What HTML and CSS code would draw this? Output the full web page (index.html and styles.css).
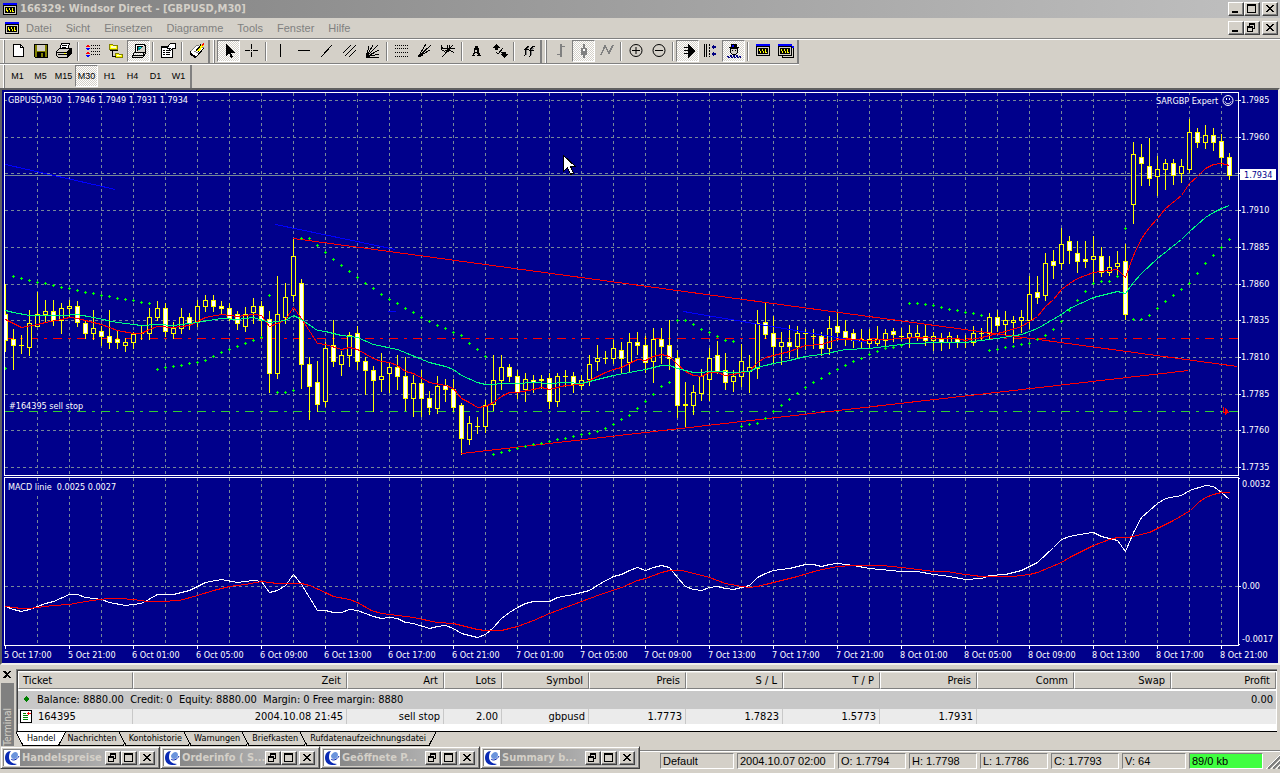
FILE: index.html
```html
<!DOCTYPE html>
<html lang="de">
<head>
<meta charset="utf-8">
<title>166329: Windsor Direct - [GBPUSD,M30]</title>
<link rel="stylesheet" href="styles.css">
</head>
<body>
<svg class="defs" width="0" height="0" aria-hidden="true">
  <symbol id="app" viewBox="0 0 14 12"><path fill="#000" d="M0 0h14v12H0z"/><path fill="#d4d0c8" d="M1 3h12v8H1z"/><path fill="#000" d="M2 4h10v6H2z"/><path fill="#00f" d="M0 0h14v2H0z"/><path fill="#ff0" d="M3 5h1v2h1v2H4V8H3zM6 5h1v2h1v2H7V7H6zM9 5h1v3h1v1H9z"/></symbol>
  <symbol id="min" viewBox="0 0 12 10"><path fill="#000" d="M2 7h6v2H2z"/></symbol>
  <symbol id="max" viewBox="0 0 12 10"><path fill="#000" d="M1 0h9v9H1zM2 2v6h7V2z" fill-rule="evenodd"/></symbol>
  <symbol id="rest" viewBox="0 0 12 10"><path fill="#000" fill-rule="evenodd" d="M3 0h6v6H7v3H1V3h2zM4 2v1h3v2h1V2zM2 5v3h4V5z"/></symbol>
  <symbol id="close" viewBox="0 0 12 10"><path fill="#000" d="M2 1h2v1h1v1h2V2h1V1h2v1H9v1H8v1H7v1h1v1h1v1h1v1H8V7H7V6H5v1H4v1H2V7h1V6h1V5h1V4H4V3H3V2H2z"/></symbol>
  <symbol id="globe" viewBox="0 0 16 16"><path fill="#fff" d="M0 0h16v16H0z"/><path fill="#0a2ab4" d="M7 1C3 1 1 4 1 8s3 7 7 7c2 0 4 0 5-1-5 0-8-3-8-7 0-3 1-5 2-6z"/><path fill="#6a94dc" d="M9 3c2-2 5-1 5 2 0 2-2 4-4 4S7 7 7 6s1-2 2-3z"/><path fill="none" stroke="#0a2ab4" d="M7 9c2 2 6 1 8-3"/></symbol>
</svg>
<header>
  <div class="title">
    <svg class="app-icon" width="14" height="12"><use href="#app"/></svg>
    <h1>166329: Windsor Direct - [GBPUSD,M30]</h1>
    <div class="wb"><button aria-label="Minimize"><svg><use href="#min"/></svg></button><button aria-label="Maximize"><svg><use href="#max"/></svg></button><button class="gap" aria-label="Close"><svg><use href="#close"/></svg></button></div>
  </div>
  <div class="menu">
    <svg class="app-icon" width="14" height="12"><use href="#app"/></svg>
    <nav><button>Datei</button><button>Sicht</button><button>Einsetzen</button><button>Diagramme</button><button>Tools</button><button>Fenster</button><button>Hilfe</button></nav>
    <div class="wb"><button aria-label="Minimize chart"><svg><use href="#min"/></svg></button><button aria-label="Restore chart"><svg><use href="#rest"/></svg></button><button class="gap" aria-label="Close chart"><svg><use href="#close"/></svg></button></div>
  </div>
  <div class="bars">
    <div class="bar">
      <div class="group">
        <button aria-label="New"><svg viewBox="0 0 16 16"><path fill="#fff" stroke="#000" d="M3.5 1.500h7l3 3v9h-10z"/><path fill="none" stroke="#000" d="M10.500 1.500v3h3"/></svg></button>
        <button aria-label="Save"><svg viewBox="0 0 16 16"><path d="M1 1h14v14H2l-1-1z"/><path fill="#808000" d="M2 2h2v6h8V2h2v12H2z"/><path fill="#d4d0c8" d="M4 2h8v6H4zM10 10h2v4h-2z"/><path d="M4 9h8v5h-2v-4H8v4H4z"/></svg></button>
        <button aria-label="Print"><svg viewBox="0 0 16 16"><path fill="#fff" stroke="#000" d="M5.500.5h8l-2 6h-8z"/><path stroke="#000" d="M6 2.500h5M6 4.500h4"/><path fill="#d4d0c8" stroke="#000" d="M.5 8.500l3-3h11l-3 4v5h-9l-2-2z"/><path stroke="#000" d="M1 9.500h10M2 11.500h9M11 9l4-3v5l-3 3"/><path fill="#ff0" d="M8 10h2v1H8z"/></svg></button>
        <i class="sep"></i>
        <button aria-label="Market watch"><svg viewBox="0 0 16 16"><path fill="#f00" d="M3 1l2 3H1zM3 8l2 3H1z"/><path fill="#00f" d="M3 8L1 5h4zM3 15l-2-3h4z"/><path stroke="#000" stroke-dasharray="1 1" d="M6 2.500h9M6 5.500h9M6 8.500h9M6 11.500h9"/></svg></button>
        <button aria-label="Navigator"><svg viewBox="0 0 16 16"><path fill="#ff0" stroke="#808000" d="M1.500 3.500v-2h3l1 1h4v4h-8zM7.500 10.500h3l1 1h3v3h-7z"/><path fill="#ffc" d="M3 3h5v2H3zM9 12h4v1H9z"/><path fill="none" stroke="#000" d="M4.500 7v6h3M2 7.500h8"/></svg></button>
        <button class="on" aria-label="Terminal"><svg viewBox="0 0 16 16"><path fill="#fff" stroke="#000" d="M4.500 1.500h9v8h-9z"/><path fill="#008080" stroke="#000" d="M6.500 3.500h5v4h-5z"/><path fill="#d4d0c8" stroke="#000" d="M1.500 12.500l2-3h10l-2 3zM1.500 12.500v2h10l3-4v-8h-1"/><path fill="#0ff" d="M8 4h2v1H8z"/></svg></button>
        <i class="sep"></i>
        <button aria-label="Properties"><svg viewBox="0 0 16 16"><path fill="#fff" stroke="#000" d="M1.500 3.500h11v11h-11z"/><path d="M1 3h7v2H1z"/><path stroke="#000" d="M3 7.500h2M6 7.500h4M3 9.500h2M6 9.500h4M3 11.500h2M6 11.500h4"/><path fill="#fff" stroke="#000" d="M8.500 2.500l2-2h5v5h-3l-2 2-1-1 1-1H7.500z"/></svg></button>
        <i class="sep"></i>
        <button aria-label="New order"><svg viewBox="0 0 16 16"><path fill="#fff" stroke="#808080" d="M1 9l7-7 7 3-7 8z"/><path fill="#fff" stroke="#000" d="M1 10l6 4 8-9M1 8v3l6 4"/><path stroke="#808080" d="M5 8l4 2M7 6l4 2"/><path stroke="#000" stroke-width="3" d="M8 8l5-6"/><path stroke="#ff0" stroke-width="2" d="M9 8l5-6"/><path stroke="#f00" stroke-width="2" d="M13 2l2-1"/></svg></button>
      </div>
      <div class="group">
        <button class="on" aria-label="Cursor"><svg viewBox="0 0 16 16"><path d="M5 1v12l3-3 2 5 2-1-2-4h4z"/></svg></button>
        <button aria-label="Crosshair"><svg viewBox="0 0 16 16"><path stroke="#000" d="M1 7.500h5M9 7.500h5M7.500 1v5M7.500 9v5"/><path d="M7 7h1v1H7z"/></svg></button>
        <i class="sep"></i>
        <button aria-label="Vertical line"><svg viewBox="0 0 16 16"><path stroke="#000" d="M7.500 1v13"/></svg></button>
        <button aria-label="Horizontal line"><svg viewBox="0 0 16 16"><path stroke="#000" d="M2 7.500h12"/></svg></button>
        <button aria-label="Trendline"><svg viewBox="0 0 16 16"><path stroke="#000" d="M2 14L13 2"/></svg></button>
        <button aria-label="Channel"><svg viewBox="0 0 16 16"><path stroke="#000" d="M1 10l8-8M3 13L14 2M7 14l7-7"/></svg></button>
        <button aria-label="Gann fan"><svg viewBox="0 0 16 16"><path stroke="#000" d="M1 14L4 3M1 14L8 2M1 14L13 2M1 14l13-7M1 14l13-3M1 14h13"/></svg></button>
        <i class="sep"></i>
        <button aria-label="Fibonacci retracement"><svg viewBox="0 0 16 16"><path stroke="#000" stroke-dasharray="1 1" d="M1 2.500h14M1 5.500h14M1 9.500h14M1 13.500h14"/></svg></button>
        <button aria-label="Fibonacci fan"><svg viewBox="0 0 16 16"><path stroke="#000" d="M1 14L9 1M1 14L14 2M1 14l12-7M1 14l5-2"/></svg></button>
        <button aria-label="Fibonacci arcs"><svg viewBox="0 0 16 16"><path fill="none" stroke="#000" d="M2 14L13 2M1 2c0 3 2 4 5 4 2 0 2-3 2-4M1 5c2 6 9 2 9-3M7 9c3-2 5-2 7 1M9 6c2-1 4-1 6 0"/></svg></button>
        <i class="sep"></i>
        <button aria-label="Text"><svg viewBox="0 0 16 16"><path fill-rule="evenodd" d="M6 3h3l2 9h1v1H8v-1h1l-1-2H6l-1 2h1v1H3v-1h1zM7 5L6 9h2z"/></svg></button>
        <button aria-label="Arrows"><svg viewBox="0 0 16 16"><path d="M4 1l4 4H6v2H3V5H1zM9 9h5v2h2l-4 4-4-4h2z"/><path fill="none" stroke="#000" d="M4 9l2 2 5-6"/></svg></button>
        <i class="sep"></i>
        <button aria-label="Indicators"><svg viewBox="0 0 16 16"><path fill="none" stroke="#808080" d="M5.500 12V6l2-2M10.500 12V7l2-2"/><path fill="none" stroke="#000" d="M3 12.500h1l1-7 2-2h1M3 6.500h5M8 13.500h1l1-8 2-2h2M8 7.500h5"/></svg></button>
      </div>
      <div class="group">
        <button aria-label="Bar chart"><svg viewBox="0 0 16 16"><path fill="#808080" d="M7 1h2v2h3v1H9v10H7v-2H4v-1h3z"/></svg></button>
        <button class="on" aria-label="Candlesticks"><svg viewBox="0 0 16 16"><path fill="#808080" d="M7 1h2v4h2v7H9v3H7v-3H5V5h2z"/><path fill="#fff" d="M7 6h2v2H7z"/></svg></button>
        <button aria-label="Line chart"><svg viewBox="0 0 16 16"><path fill="none" stroke="#808080" stroke-width="1.500" d="M2 12L6 3l4 7 4-8"/></svg></button>
        <i class="sep"></i>
        <button aria-label="Zoom in"><svg viewBox="0 0 16 16" class="smooth"><circle cx="8" cy="7.500" r="6" fill="none" stroke="#000"/><path stroke="#000" d="M4 7.500h8M8 4v7"/></svg></button>
        <button aria-label="Zoom out"><svg viewBox="0 0 16 16" class="smooth"><circle cx="8" cy="7.500" r="6" fill="none" stroke="#000"/><path stroke="#000" d="M4 7.500h8"/></svg></button>
        <i class="sep"></i>
        <button class="on" aria-label="Auto scroll"><svg viewBox="0 0 16 16"><path d="M8 1l7 7-7 7z"/><path stroke="#000" d="M4 4.500h5M4 7.500h5M4 10.500h5"/></svg></button>
        <button aria-label="Chart shift"><svg viewBox="0 0 16 16"><path stroke="#000" d="M1.500 1v13M3.500 1v13"/><path stroke="#000" stroke-dasharray="2 1" d="M6.500 1v13"/><path fill="#000080" d="M8 4l3-3v2h2v2h-2v2zM8 11l3-3v2h2v2h-2v2z"/></svg></button>
        <button class="on" aria-label="Experts"><svg viewBox="0 0 16 16"><path d="M5 1h6v3h2v1H3V4h2z"/><path fill="#d4d0c8" stroke="#000" d="M4.500 5.500h7v4l-2 2h-3l-2-2z"/><path fill="#00f" d="M6 2h2v2H6z"/><path d="M6 7h1v1H6zM9 7h1v1H9z"/><path stroke="#000080" stroke-dasharray="2 1" d="M4 12.500h9M1 13.500h14M2 14.500h13"/></svg></button>
        <i class="sep"></i>
        <button aria-label="Chart window"><svg viewBox="0 0 16 16"><path d="M1 1h14v12H1z"/><path fill="#00f" d="M1 1h14v2H1z"/><path fill="#d4d0c8" d="M2 4h12v8H2z"/><path d="M3 5h10v6H3z"/><path fill="#ff0" d="M4 6h1v2h1v2H5V8H4zM7 6h1v2h1v2H8V8H7zM10 6h1v3h1v1h-2z"/></svg></button>
        <button aria-label="All charts"><svg viewBox="0 0 16 16"><path fill="#d4d0c8" stroke="#000" d="M4.500 4.500h11v10h-11z"/><path d="M0 1h14v12H0z"/><path fill="#00f" d="M0 1h14v2H0zM14 3h2v2h-2z"/><path fill="#d4d0c8" d="M1 4h12v8H1z"/><path d="M2 5h10v6H2z"/><path fill="#ff0" d="M3 6h1v2h1v2H4V8H3zM6 6h1v2h1v2H7V8H6zM9 6h1v3h1v1H9z"/></svg></button>
      </div>
    </div>
    <div class="bar">
      <div class="group tf"><button>M1</button><button>M5</button><button>M15</button><button class="on">M30</button><button>H1</button><button>H4</button><button>D1</button><button>W1</button></div>
    </div>
  </div>
</header>
<main class="chart">
  <svg id="chart" viewBox="2 90 1276 573" role="img" aria-label="GBPUSD M30"></svg>
</main>
<section class="terminal">
  <aside><button class="tclose" aria-label="Close terminal"><svg width="8" height="7" viewBox="0 0 8 7"><path d="M0 0h2l2 2 2-2h2L5 3.500 8 7H6L4 5 2 7H0l3-3.500z"/></svg></button><div class="vtitle"><span>Terminal</span></div></aside>
  <div class="tmain">
    <div class="sheet">
      <table>
        <colgroup><col class="c115"><col class="c214"><col class="c97"><col class="c58"><col class="c87"><col class="c97"><col class="c97"><col class="c97"><col class="c97"><col class="c97"><col class="c97"><col></colgroup>
        <thead><tr><th>Ticket</th><th>Zeit</th><th>Art</th><th>Lots</th><th>Symbol</th><th>Preis</th><th>S / L</th><th>T / P</th><th>Preis</th><th>Comm</th><th>Swap</th><th>Profit</th></tr></thead>
        <tbody>
          <tr class="space"><td colspan="12"></td></tr>
          <tr class="balance"><td colspan="11"><svg width="6" height="6" viewBox="0 0 6 6"><path fill="#008000" d="M3 0l3 3-3 3-3-3z"/></svg>Balance: 8880.00&nbsp; Credit: 0&nbsp; Equity: 8880.00&nbsp; Margin: 0 Free margin: 8880</td><td>0.00</td></tr>
          <tr class="order"><td><svg width="12" height="13" viewBox="0 0 12 13"><path fill="#fff" stroke="#000" d="M.5.5h11v12H.5z"/><path stroke="#008000" d="M3 3.500h3M3 5.500h5M3 7.500h5M3 9.500h5"/><path stroke="#f00" d="M7 3.500h4M8.500 2v3"/></svg>164395</td><td>2004.10.08 21:45</td><td>sell stop</td><td>2.00</td><td>gbpusd</td><td>1.7773</td><td>1.7823</td><td>1.5773</td><td>1.7931</td><td class="none"></td><td class="none"></td><td class="none"></td></tr>
        </tbody>
      </table>
    </div>
    <div class="tabs">
      <svg viewBox="0 0 10 14"><path fill="#fff" d="M0 0h10v14H7z"/><path d="M0 0l7 13.500h3" fill="none" stroke="#000"/></svg>
      <button class="active">Handel</button>
      <svg viewBox="0 0 10 14"><path fill="#fff" d="M0 0h8L1 14H0z"/><path d="M8.500 0L1.500 13.500H0M2 13.500h8" fill="none" stroke="#000"/></svg>
      <button>Nachrichten</button>
      <svg viewBox="0 0 10 14"><path d="M1 0l7 13.500h2M0 13.500h5l2-3" fill="none" stroke="#000"/></svg>
      <button>Kontohistorie</button>
      <svg viewBox="0 0 10 14"><path d="M1 0l7 13.500h2M0 13.500h5l2-3" fill="none" stroke="#000"/></svg>
      <button>Warnungen</button>
      <svg viewBox="0 0 10 14"><path d="M1 0l7 13.500h2M0 13.500h5l2-3" fill="none" stroke="#000"/></svg>
      <button>Briefkasten</button>
      <svg viewBox="0 0 10 14"><path d="M1 0l7 13.500h2M0 13.500h5l2-3" fill="none" stroke="#000"/></svg>
      <button>Rufdatenaufzeichnungsdatei</button>
      <svg viewBox="0 0 10 14"><path d="M9 0L2 13.500H0" fill="none" stroke="#000"/></svg>
    </div>
  </div>
</section>
<footer>
  <div class="mdi"><div class="cap-bar"><svg class="globe"><use href="#globe"/></svg><b>Handelspreise</b><div class="wb"><button aria-label="Restore"><svg><use href="#rest"/></svg></button><button aria-label="Maximize"><svg><use href="#max"/></svg></button><button class="gap" aria-label="Close"><svg><use href="#close"/></svg></button></div></div></div>
  <div class="mdi"><div class="cap-bar"><svg class="globe"><use href="#globe"/></svg><b>Orderinfo ( S...</b><div class="wb"><button aria-label="Restore"><svg><use href="#rest"/></svg></button><button aria-label="Maximize"><svg><use href="#max"/></svg></button><button class="gap" aria-label="Close"><svg><use href="#close"/></svg></button></div></div></div>
  <div class="mdi"><div class="cap-bar"><svg class="globe"><use href="#globe"/></svg><b>Geöffnete P...</b><div class="wb"><button aria-label="Restore"><svg><use href="#rest"/></svg></button><button aria-label="Maximize"><svg><use href="#max"/></svg></button><button class="gap" aria-label="Close"><svg><use href="#close"/></svg></button></div></div></div>
  <div class="mdi"><div class="cap-bar"><svg class="globe"><use href="#globe"/></svg><b>Summary b...</b><div class="wb"><button aria-label="Restore"><svg><use href="#rest"/></svg></button><button aria-label="Maximize"><svg><use href="#max"/></svg></button><button class="gap" aria-label="Close"><svg><use href="#close"/></svg></button></div></div></div>
  <div class="status"><span class="w74">Default</span><span class="w98">2004.10.07 02:00</span><span class="w68">O: 1.7794</span><span class="w68">H: 1.7798</span><span class="w68">L: 1.7786</span><span class="w68">C: 1.7793</span><span class="w64">V: 64</span><span class="w74 net">89/0 kb</span>
    <svg class="grip" viewBox="0 0 15 15"><path stroke="#fff" d="M0 15L15 0M5 15L15 5M10 15l5-5"/><path stroke="#808080" stroke-width="2" d="M2 15L15 2M7 15l8-8M12 15l3-3"/></svg></div>
</footer>
<script src="chart.js"></script>
</body>
</html>
```
FILE: styles.css
```css
* { box-sizing: border-box; }
body { margin: 0; background: #d4d0c8; color: #000; font: 11px/14px "DejaVu Sans Condensed", "DejaVu Sans", sans-serif; }
button { margin: 0; padding: 0; border: 0; background: none; color: inherit; font: inherit; }
svg { shape-rendering: crispEdges; flex: none; display: block; }
.smooth { shape-rendering: auto; }
.defs { position: absolute; }

.title { display: flex; align-items: center; height: 18px; padding: 0 2px 0 3px; background: linear-gradient(to right, #808080, #c0c0c0); }
.title h1 { flex: 1; margin: 0 0 0 3px; color: #d4d0c8; font-size: 11px; line-height: 18px; font-weight: bold; white-space: nowrap; }
.wb { display: flex; flex: none; margin-left: auto; }
.wb button { width: 16px; height: 14px; padding: 1px; background: #d4d0c8; border: 1px solid; border-color: #fff #404040 #404040 #fff; box-shadow: inset -1px -1px #808080; }
.wb svg { width: 12px; height: 10px; }
.wb .gap { margin-left: 2px; }

.menu { display: flex; align-items: center; height: 20px; padding: 0 2px 0 5px; }
.menu nav { display: flex; gap: 14px; margin-left: 7px; color: #808080; font: 11px/18px "Liberation Sans", sans-serif; }

.bars { border-top: 1px solid #808080; box-shadow: inset 0 1px #fff; padding-top: 1px; height: 50px; }
.bar { display: flex; height: 24px; width: max-content; }
.bar:first-child { height: 25px; border-bottom: 1px solid #fff; box-shadow: inset 0 -1px #808080; }
.group { display: flex; margin-left: 3px; padding-left: 3px; border-left: 1px solid #fff; box-shadow: inset 1px 0 #808080; border-right: 2px solid #808080; height: 23px; }
.group:first-child { padding-left: 2px; }
.group button { display: grid; place-items: center; width: 23px; height: 22px; }
.group button svg { width: 16px; height: 16px; }
.group .on { background: repeating-conic-gradient(#fff 0 25%, #d4d0c8 0 50%) 0 0 / 2px 2px; border: 1px solid; border-color: #808080 #fff #fff #808080; }
.sep { width: 2px; margin: 2px; background: linear-gradient(to right, #808080 50%, #fff 50%); }
.tf { font: 9px/12px "Liberation Sans", sans-serif; }

.chart { border: 2px solid; border-color: #606060 #f0eeea #f0eeea #606060; background: #00008b; }
#chart { width: 100%; height: auto; }
#chart text { fill: #fff; font-size: 9px; white-space: pre; }
#chart .price-now { fill: #00008b; }

.terminal { display: flex; padding: 4px 3px 0 0; }
.terminal aside { width: 16px; display: flex; flex-direction: column; padding: 2px 2px 0 1px; }
.tclose { padding: 0 2px 5px; }
.vtitle { flex: 1; display: flex; align-items: flex-end; background: #808080; color: #d4d0c8; }
.vtitle span { writing-mode: vertical-rl; transform: rotate(180deg); font-size: 10px; line-height: 13px; }
.tmain { flex: 1; min-width: 0; }
.sheet { background: #fff; border: 1px solid #808080; border-width: 1px 0 0 1px; box-shadow: inset 1px 1px #404040; padding: 2px 1px 7px 1px; border-bottom: 1px solid #000; }
table { width: 100%; table-layout: fixed; border-collapse: separate; border-spacing: 0; }
.c115 { width: 115px; } .c214 { width: 214px; } .c97 { width: 97px; } .c58 { width: 58px; } .c87 { width: 87px; }
th { height: 17px; padding: 0 5px; text-align: right; font-weight: normal; background: #d4d0c8; border: 1px solid; border-color: #e8e6e0 #808080 #808080 #fff; line-height: 15px; }
th:first-child { text-align: left; padding-left: 4px; }
td { padding: 0 3px 0 0; text-align: right; white-space: nowrap; }
.space td { height: 2px; }
.balance td { height: 18px; background: #c8c8c8; line-height: 18px; }
.balance td:first-child { text-align: left; padding-left: 5px; }
.balance svg { display: inline-block; margin-right: 8px; vertical-align: 1px; }
.order td { height: 15px; background: #ebebeb; border-right: 1px solid #c8c8c8; line-height: 15px; }
.order td:first-child { display: flex; align-items: center; gap: 6px; padding-left: 2px; }
.order .none { border-right-color: #ebebeb; }
.tabs { display: flex; height: 14px; font-size: 9px; line-height: 13px; }
.tabs svg { width: 10px; height: 14px; }
.tabs button { padding: 0 1px; border-bottom: 1px solid #000; }
.tabs .active { background: #fff; }

footer { display: flex; height: 28px; border-bottom: 1px solid #fff; }
.mdi { width: 160px; height: 23px; flex: none; padding: 2px; border: 1px solid; border-color: #d4d0c8 #404040 #404040 #d4d0c8; box-shadow: inset 1px 1px #fff, inset -1px -1px #808080; }
.cap-bar { display: flex; align-items: center; height: 17px; padding: 0 2px 0 1px; background: linear-gradient(to right, #808080, #c0c0c0 90%); }
.globe { width: 16px; height: 16px; shape-rendering: auto; }
.cap-bar b { flex: 1; min-width: 0; overflow: hidden; margin-left: 2px; color: #d4d0c8; white-space: nowrap; }
.status { flex: 1; display: flex; align-items: flex-end; gap: 3px; height: 23px; margin-top: 4px; padding: 0 0 4px 20px; border-top: 1px solid #808080; box-shadow: inset 0 1px #fff; font: 11px/14px "Liberation Sans", sans-serif; }
.status span { padding: 0 2px; height: 16px; border: 1px solid; border-color: #808080 #fff #fff #808080; white-space: nowrap; flex: none; }
.w74 { width: 74px; } .w98 { width: 98px; } .w68 { width: 68px; } .w64 { width: 64px; }
.status .net { background: #40ff40; }
.grip { width: 15px; height: 15px; margin-left: auto; }
```
FILE: chart.js
```js
// Candles, one every 8px: high, body top, body bottom, low; "f" marks a falling bar.
const candles = `284,314,340,352f 329,339,345,370f 335,345,345,354 310,323,347,356 292,314,326,326 300,311,314,322 300,311,320,326f 303,308,320,334 300,306,308,317 301,306,322,327f 320,323,333,339f 310,328,333,340 326,331,336,346f 310,336,342,349f 330,339,342,349f 338,342,345,352 332,334,342,349 325,333,333,340 308,317,333,340 301,308,317,321 303,308,331,337f 322,328,333,339 308,317,328,334 313,317,323,330f 300,306,321,327 295,300,306,312 295,300,306,312f 301,306,308,315f 303,308,318,321f 311,314,323,330f 307,314,326,332 298,306,312,324 301,306,320,336f 311,319,373,393f 276,314,373,379 283,297,317,324 238,256,295,302 279,283,364,389f 357,364,386,420f 361,382,404,412f 342,348,401,407 320,345,361,367f 351,355,364,376 332,335,355,367 326,333,361,370f 357,361,370,395f 366,370,380,412f 353,376,379,392 363,367,373,393 355,367,376,390f 357,376,398,411f 375,383,398,417 370,383,398,417f 391,398,407,415f 376,386,408,414 379,385,389,402f 379,389,407,412f 403,405,438,455f 416,423,439,445 417,426,426,434 400,405,426,433 355,380,404,411 355,367,380,390 364,367,376,382f 370,376,392,399f 373,379,389,402 375,380,382,393f 375,379,380,389f 373,378,401,409f 373,376,401,407 370,376,376,387 372,376,384,393f 375,380,385,390 355,364,379,386 345,358,361,371 351,358,358,364 340,348,358,364 342,350,358,374f 333,342,362,372 332,342,345,355f 336,345,362,373f 328,339,361,383 328,339,346,364f 320,345,358,370f 350,358,405,418f 382,404,405,427f 385,392,405,415 369,376,393,401 348,358,379,401 341,355,371,374f 353,370,382,390f 370,376,381,392 344,361,376,387 355,367,371,393 310,323,368,379 303,322,334,339f 316,333,346,363f 332,342,346,365 325,342,346,359f 326,333,346,358 329,333,333,350 329,336,336,349 332,336,348,356f 316,328,348,355 312,326,332,341f 320,331,337,346f 329,333,340,348f 329,339,341,348 329,339,343,349 326,339,343,346 329,333,340,347 328,331,334,342f 328,336,336,341 325,333,337,348 325,333,336,341 325,336,340,346f 332,336,340,351 333,339,342,351f 332,336,342,349 335,339,342,348f 335,342,342,348 326,333,342,346 328,333,333,340 313,317,333,339 310,317,325,332f 311,320,324,336 316,320,322,343 310,317,320,333 276,294,320,329 276,292,297,304f 253,263,295,301 250,261,265,279f 228,244,263,270 236,241,250,264f 241,253,261,273f 241,259,261,268f 236,256,259,283 247,256,272,277f 256,267,272,276 251,263,266,276 244,261,314,320f 142,154,204,224 144,157,163,186f 138,166,178,186f 156,169,176,196 159,163,169,190 159,163,175,185f 159,166,173,183 119,132,169,173 128,132,142,148f 125,135,142,149 128,135,142,151f 134,141,157,166f 153,157,175,180f`.split(' ');

// Parabolic SAR, one value per candle.
const sar = [368,276,278,280,282,283,285,287,288,290,292,293,295,296,298,299,300,302,303,369,367,366,365,363,362,360,356,352,349,346,343,340,337,295,392,392,390,238,238,245,252,259,265,271,277,283,288,294,299,303,308,312,317,321,325,328,332,335,343,349,356,454,452,450,448,446,444,443,441,439,438,436,434,433,431,428,424,419,415,408,401,394,386,382,320,320,324,329,332,336,340,341,426,424,423,418,411,405,399,393,387,382,378,373,369,365,361,358,354,351,348,347,345,303,303,304,305,307,309,310,312,313,315,350,349,347,346,344,343,339,335,329,321,310,300,291,283,281,281,276,228,319,319,315,308,301,295,289,283,273,263,255,247,239];

const fast = '5,319 21,327 37,324 45,322 61,319 69,317 77,318 93,322 101,324 117,330 133,333 141,333 149,329 157,326 173,327 189,325 197,321 205,317 221,314 237,316 253,314 261,315 269,326 277,323 285,319 293,307 301,318 317,343 325,344 341,349 349,347 357,349 373,358 381,361 389,362 397,365 405,371 413,373 429,382 445,385 453,388 461,398 469,402 477,407 485,406 493,402 501,396 509,392 517,392 533,389 541,387 549,389 565,385 581,384 589,380 597,376 605,372 613,369 621,367 629,363 637,359 645,360 653,356 661,354 669,356 677,364 685,371 693,375 701,376 709,372 717,372 725,375 733,374 741,372 749,371 757,362 765,357 773,355 789,351 805,345 821,344 837,339 853,339 869,340 885,339 901,338 917,337 941,338 957,338 965,340 981,337 997,333 1005,331 1021,326 1029,321 1037,316 1045,306 1053,299 1061,289 1069,283 1077,278 1093,272 1109,270 1117,269 1125,277 1133,255 1141,238 1149,227 1157,218 1165,208 1181,195 1189,183 1197,176 1205,168 1213,164 1221,163 1229,165';
const slow = '5,310 13,312 29,315 61,315 77,314 93,317 117,322 141,325 157,324 173,325 197,322 221,318 237,319 253,317 269,322 285,320 293,315 301,319 317,330 325,331 341,335 357,337 373,344 397,349 429,362 445,366 453,369 461,375 477,382 485,384 493,384 501,383 517,383 533,382 549,383 565,382 581,383 605,377 613,375 629,372 645,369 661,365 669,365 677,368 693,372 717,371 733,372 749,371 757,367 773,363 789,360 805,356 821,354 845,349 869,348 885,346 909,343 941,342 965,342 981,340 997,338 1021,334 1037,328 1061,314 1069,308 1093,297 1117,291 1125,293 1133,282 1141,273 1157,258 1181,239 1189,231 1205,217 1213,212 1221,208 1229,205';
const macd = '5,606 13,609 21,611 29,609 45,603 53,601 69,594 77,594 85,597 101,599 109,602 125,605 141,603 157,594 173,594 189,590 205,582 221,579 237,582 253,580 261,581 269,592 277,590 285,585 293,574 301,584 317,610 325,610 333,612 341,612 349,609 357,610 373,616 381,618 389,617 397,618 405,622 413,623 429,628 437,626 445,625 453,628 461,633 477,637 485,634 493,627 501,618 509,612 517,607 525,603 533,601 541,601 549,601 557,597 573,594 589,590 600,583 613,576 621,574 629,570 637,567 645,570 653,567 661,565 669,567 677,577 685,586 693,589 701,590 709,587 717,586 725,588 733,589 741,587 749,585 757,577 765,573 773,570 789,568 805,564 813,564 821,566 829,564 837,563 853,565 869,568 901,571 917,571 933,574 949,576 965,579 981,578 989,575 1005,574 1021,570 1029,566 1037,562 1053,547 1061,539 1069,536 1085,533 1093,532 1101,536 1117,540 1125,551 1133,532 1141,517 1157,503 1165,498 1181,495 1189,490 1205,485 1213,486 1221,492 1229,499';
const signal = '5,606 21,608 29,608 53,605 69,604 85,601 107,598 120,598 133,599 147,601 160,601 179,600 197,595 213,590 229,586 245,584 261,581 277,583 301,583 309,585 325,592 333,596 349,599 357,602 371,610 381,613 413,617 437,622 453,623 477,629 485,630 501,630 517,626 533,620 549,613 565,607 581,601 600,594 621,587 637,580 645,578 661,572 669,570 682,570 709,577 725,583 741,586 749,587 757,586 773,582 797,576 817,570 837,566 853,565 882,565 910,568 933,571 946,571 965,574 981,576 1013,576 1029,574 1037,572 1061,562 1069,557 1093,545 1109,539 1117,537 1128,537 1149,532 1173,520 1190,510 1198,502 1205,497 1213,494 1221,492 1229,492';

const out = [];
const path = (d, stroke, extra = '') => out.push(`<path d="${d}" fill="none" stroke="${stroke}" ${extra}/>`);
const line = (pts, stroke) => out.push(`<polyline points="${pts}" transform="translate(.5 .5)" fill="none" stroke="${stroke}"/>`);
const rect = (x, y, w, h, fill) => out.push(`<rect x="${x}" y="${y}" width="${w}" height="${h}" fill="${fill}"/>`);
const text = (x, y, s, cls = '') => out.push(`<text x="${x}" y="${y}" class="${cls}">${s}</text>`);

const levels = [100, 137, 173, 210, 247, 284, 320, 357, 394, 430, 467];
const prices = ['1.7985', '1.7960', '', '1.7910', '1.7885', '1.7860', '1.7835', '1.7810', '1.7785', '1.7760', '1.7735'];

const dash = 'stroke-dasharray="3 3"';
for (let x = 37; x < 1238; x += 32) path(`M${x + .5} 93V475M${x + .5} 478V645`, '#778899', dash);
[...levels, 586].forEach(y => path(`M5 ${y + .5}H1238`, '#778899', dash));
path('M5 175.5H1238', '#778899');
const dashDot = 'stroke-dasharray="9 6 3 6"';
path('M5 338.5H1238', '#ff0000', dashDot);
path('M5 411.5H1238', '#32cd32', dashDot);

line('5,164 115,189', '#0000ff');
line('275,224 395,249', '#0000ff');
line('387,311 395,311', '#0000ff');

candles.forEach((c, i) => {
  const [h, t, b, l] = c.split(',').map(parseFloat);
  const x = 5 + i * 8;
  path(`M${x + .5} ${h}V${t}M${x + .5} ${b}V${l}`, '#ffff00');
  const left = Math.max(x - 2, 5), w = x + 3 - left;
  rect(left, t, w, b - t + 1, '#ffff00');
  if (b - t > 1) rect(left + (i ? 1 : 0), t + 1, w - (i ? 2 : 1), b - t - 1, c.endsWith('f') ? '#ffffff' : '#00008b');
});

line('683,311 866,342', '#0000ff');
line('293,238 1237,366', '#ff0000');
line('461,453 1188,370', '#ff0000');
line(fast, '#ff0000');
line(slow, '#00ff7f');
sar.forEach((y, i) => {
  const x = 5 + i * 8;
  path(`M${Math.max(x - 1, 5)} ${y + .5}H${x + 2}M${x + .5} ${y - 1}V${y + 2}`, '#00ff00');
});
path('M1223.5 407V412H1229M1225.5 408V415M1226.500 409V414M1227.500 410V413', '#ff0000');
line(macd, '#ffffff');
line(signal, '#ff0000');

path('M4.500 475.5V92.5H1238.500V475.5H4M4.500 645.5V477.5H1238.500V645.5H4', '#ffffff');

levels.forEach((y, i) => {
  path(`M1239 ${y + .5}H1241`, '#ffffff');
  if (prices[i]) text(1241, y + 3, prices[i]);
});
rect(1240, 169, 36, 11, '#ffffff');
text(1244, 178, '1.7934', 'price-now');
text(1242, 487, '0.0032');
text(1242, 589, '0.00');
text(1242, 642, '-0.0017');
path('M1239 586.5H1241M1239 478.5H1240M1239 644.5H1240', '#ffffff');

['5 Oct 17', '5 Oct 21', ...[6, 7, 8].flatMap(d => ['01', '05', '09', '13', '17', '21'].map(h => `${d} Oct ${h}`))].forEach((t, i) => {
  path(`M${5.5 + i * 64} 646V649`, '#ffffff');
  text(4 + i * 64, 658, `${t}:00`);
});

rect(7, 95, 189, 11, '#00008b');
text(8, 103, 'GBPUSD,M30  1.7946 1.7949 1.7931 1.7934');
rect(7, 482, 115, 11, '#00008b');
text(8, 490, 'MACD linie  0.0025 0.0027');
rect(9, 401, 74, 10, '#00008b');
text(9, 409, '#164395 sell stop');
rect(1152, 95, 83, 11, '#00008b');
text(1156, 104, 'SARGBP Expert');
out.push('<g fill="none" stroke="#fff" shape-rendering="auto"><circle cx="1228" cy="100.500" r="5"/><path d="M1225 101.500c1 3 5 3 6 0M1226.500 98v2M1229.500 98v2"/></g>');
// Mouse pointer over the chart
out.push('<path d="M563.5 155.5v16l4-4 3 7 3-1.500-3-6.500h5z" fill="#fff" stroke="#000"/>');

document.getElementById('chart').innerHTML = out.join('');
```
